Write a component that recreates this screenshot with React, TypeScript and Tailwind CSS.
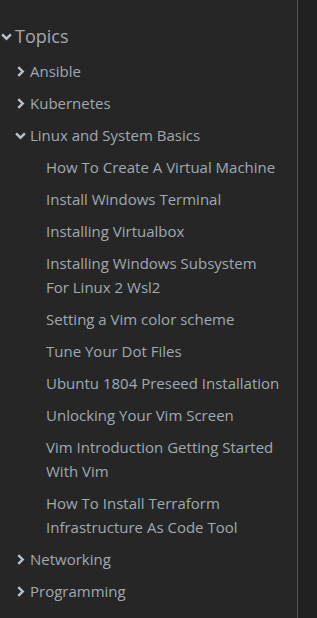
import React from "react";

const Chevron = ({ open }: { open?: boolean }) => (
  <svg
    width="11"
    height="11"
    viewBox="0 0 10 10"
    className="shrink-0 text-[#b9c2cb]"
    fill="none"
    stroke="currentColor"
    strokeWidth="2.2"
  >
    {open ? <path d="M1 3 L5 7 L9 3" /> : <path d="M3 1 L7 5 L3 9" />}
  </svg>
);

const linux = [
  "How To Create A Virtual Machine",
  "Install Windows Terminal",
  "Installing Virtualbox",
  "Installing Windows Subsystem For Linux 2 Wsl2",
  "Setting a Vim color scheme",
  "Tune Your Dot Files",
  "Ubuntu 1804 Preseed Installation",
  "Unlocking Your Vim Screen",
  "Vim Introduction Getting Started With Vim",
  "How To Install Terraform Infrastructure As Code Tool",
];

const Section = ({ name, open }: { name: string; open?: boolean }) => (
  <div className="flex items-center gap-[4px] pl-[15px] py-1 leading-6">
    <Chevron open={open} />
    <span>{name}</span>
  </div>
);

export default function App() {
  return (
    <div
      className="flex h-[618px] w-[317px] overflow-hidden bg-[#262626] text-[#a0a9b2]"
      style={{ fontFamily: '"Open Sans", "Noto Sans", sans-serif' }}
    >
      <div className="w-[297px] shrink-0 pt-6 text-[15px]">
        <div className="flex items-center gap-[3px] pl-[1px] py-[1px] text-[18px] leading-[22px]">
          <Chevron open />
          <span>Topics</span>
        </div>
        <div className="mt-[7px]">
          <Section name="Ansible" />
          <Section name="Kubernetes" />
          <Section name="Linux and System Basics" open />
          <ul className="pl-[46px] pr-[16px]">
            {linux.map((t) => (
              <li key={t} className="py-1 leading-6">
                {t}
              </li>
            ))}
          </ul>
          <Section name="Networking" />
          <Section name="Programming" />
          <Section name="Security and Hardening" />
        </div>
      </div>
      <div className="w-px shrink-0 bg-[#555555]" />
      <div className="flex-1 bg-[#212121]" />
    </div>
  );
}
